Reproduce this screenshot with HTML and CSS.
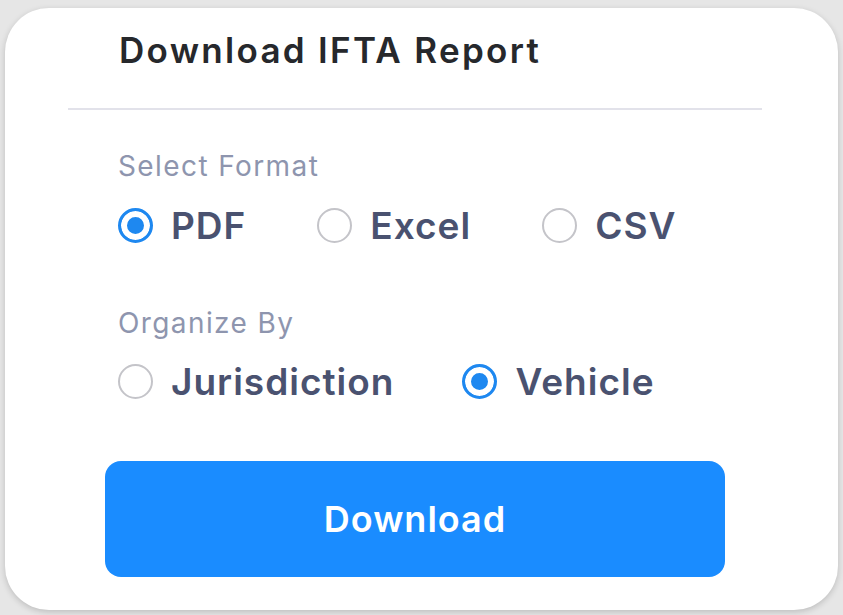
FILE: index.html
```html
<!DOCTYPE html>
<html lang="en">
<head>
    <meta charset="UTF-8">
    <meta name="viewport" content="width=device-width, initial-scale=1.0">
    <title>Download IFTA Report</title>
    <link rel="stylesheet" href="styles.css">
</head>
<body>
    <div class="card">
        <header class="card-header">
            <h1>Download IFTA Report</h1>
        </header>

        <form class="report-form">
            <div class="field">
                <div class="field-label">Select Format</div>
                <div class="options">
                    <label class="option">
                        <input type="radio" name="format" value="pdf" checked>
                        <span>PDF</span>
                    </label>
                    <label class="option">
                        <input type="radio" name="format" value="excel">
                        <span>Excel</span>
                    </label>
                    <label class="option">
                        <input type="radio" name="format" value="csv">
                        <span>CSV</span>
                    </label>
                </div>
            </div>

            <div class="field field-organize">
                <div class="field-label">Organize By</div>
                <div class="options">
                    <label class="option">
                        <input type="radio" name="organize" value="jurisdiction">
                        <span>Jurisdiction</span>
                    </label>
                    <label class="option">
                        <input type="radio" name="organize" value="vehicle" checked>
                        <span>Vehicle</span>
                    </label>
                </div>
            </div>

            <button type="button" class="download-btn">Download</button>
        </form>
    </div>
</body>
</html>
```

FILE: styles.css
```css
* {
    box-sizing: border-box;
}
html, body {
    height: 100%;
}
body {
    margin: 0;
    padding: 8px 5px 5px 5px;
    background: #e6e6e6;
    font-family: Inter, 'Noto Sans', sans-serif;
}
.card {
    height: 602px;
    background: #fff;
    border-radius: 44px;
    box-shadow: 0 2px 6px rgba(0,0,0,0.18);
    padding: 22px 76px 0 63px;
}
.card-header {
    border-bottom: 2px solid #e2e2ea;
    padding: 0 0 37px 51px;
}
h1 {
    margin: 0;
    font-size: 35px;
    line-height: 41px;
    font-weight: 600;
    color: #26282c;
    letter-spacing: 2.3px;
}
.report-form {
    padding-top: 40px;
}
.field {
    padding-left: 50px;
}
.field-organize {
    margin-top: 59px;
}
.field-label {
    font-size: 28px;
    line-height: 33px;
    color: #8e95ae;
    letter-spacing: 1.4px;
}
.options {
    display: flex;
    gap: 71px;
    margin-top: 20px;
}
.field-organize .options {
    margin-top: 19px;
    gap: 68px;
}
.option {
    display: flex;
    align-items: center;
    gap: 18px;
    font-size: 37px;
    line-height: 45px;
    font-weight: 600;
    color: #4a5270;
    letter-spacing: 1px;
    cursor: pointer;
}
.option input {
    appearance: none;
    -webkit-appearance: none;
    margin: 0;
    width: 35px;
    height: 35px;
    border-radius: 50%;
    border: 2px solid #c4c4c9;
    background: #fff;
}
.option input:checked {
    border: 3px solid #1e88f0;
    background: #1e88f0;
    box-shadow: inset 0 0 0 6px #fff;
}
.download-btn {
    display: block;
    width: 620px;
    height: 116px;
    margin: 57px 0 0 37px;
    border: none;
    border-radius: 16px;
    background: #1a8cff;
    color: #fff;
    font-family: inherit;
    font-size: 36px;
    font-weight: 600;
    letter-spacing: 1px;
    cursor: pointer;
}
.download-btn:hover {
    background: #0f80f0;
}
```
